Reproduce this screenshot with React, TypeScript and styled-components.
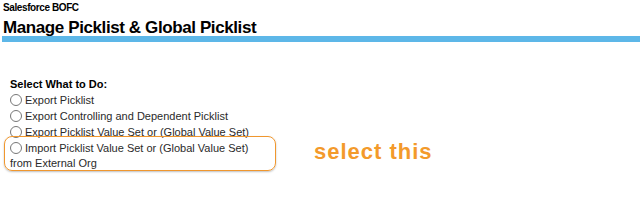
import styled, { createGlobalStyle } from 'styled-components';

const GlobalStyle = createGlobalStyle`
  html, body {
    margin: 0;
    padding: 0;
    background: #fff;
  }
  body {
    font-family: "Liberation Sans", Arial, sans-serif;
    color: #000;
  }
`;

const Page = styled.div`
  width: 640px;
  height: 218px;
  overflow: hidden;
  background: #fff;
`;

const Header = styled.div`
  padding: 2px 0 0 3px;
`;

const AppName = styled.div`
  font-size: 10px;
  font-weight: bold;
  line-height: 12px;
  letter-spacing: -0.4px;
`;

const Title = styled.h1`
  margin: 5px 0 0 0;
  font-size: 17px;
  line-height: 17px;
  font-weight: bold;
  letter-spacing: -0.4px;
`;

const Bar = styled.div`
  height: 6px;
  margin: 0 0 0 2px;
  background: #5db7e8;
`;

const Content = styled.div`
  display: flex;
  align-items: flex-start;
  padding: 34px 0 0 10px;
`;

const Form = styled.div`
  display: flex;
  flex-direction: column;
`;

const Label = styled.div`
  font-size: 11px;
  font-weight: bold;
  line-height: 16px;
`;

const Option = styled.label`
  display: flex;
  align-items: center;
  font-size: 11px;
  line-height: 16px;
  color: #2a2a2a;
`;

const Radio = styled.span`
  width: 10px;
  height: 10px;
  border: 1px solid #777;
  border-radius: 50%;
  margin-right: 3px;
  flex: none;
`;

const Highlight = styled.div<{ $color: string }>`
  margin: -4px 0 0 -6px;
  padding: 2.5px 5px 0 5px;
  width: 260px;
  border: 1.5px solid ${p => p.$color};
  border-radius: 8px;
  box-shadow: 0 1px 2px rgba(0, 0, 0, 0.25);
`;

const Plain = styled.div`
  font-size: 11px;
  line-height: 14px;
  color: #2a2a2a;
`;

const Callout = styled.div`
  margin: 63px 0 0 38px;
  color: #f39a2b;
  font-size: 22px;
  line-height: 26px;
  font-weight: bold;
  letter-spacing: 1px;
`;

const options = [
  'Export Picklist',
  'Export Controlling and Dependent Picklist',
  'Export Picklist Value Set or (Global Value Set)',
];

export default function App() {
  return (
    <Page>
      <GlobalStyle />
      <Header>
        <AppName>Salesforce BOFC</AppName>
        <Title>Manage Picklist &amp; Global Picklist</Title>
      </Header>
      <Bar />
      <Content>
        <Form>
          <Label>Select What to Do:</Label>
          {options.map(o => (
            <Option key={o}>
              <Radio />
              {o}
            </Option>
          ))}
          <Highlight $color="#f0972e">
            <Option>
              <Radio />
              Import Picklist Value Set or (Global Value Set)
            </Option>
            <Plain>from External Org</Plain>
          </Highlight>
        </Form>
        <Callout>select this</Callout>
      </Content>
    </Page>
  );
}
